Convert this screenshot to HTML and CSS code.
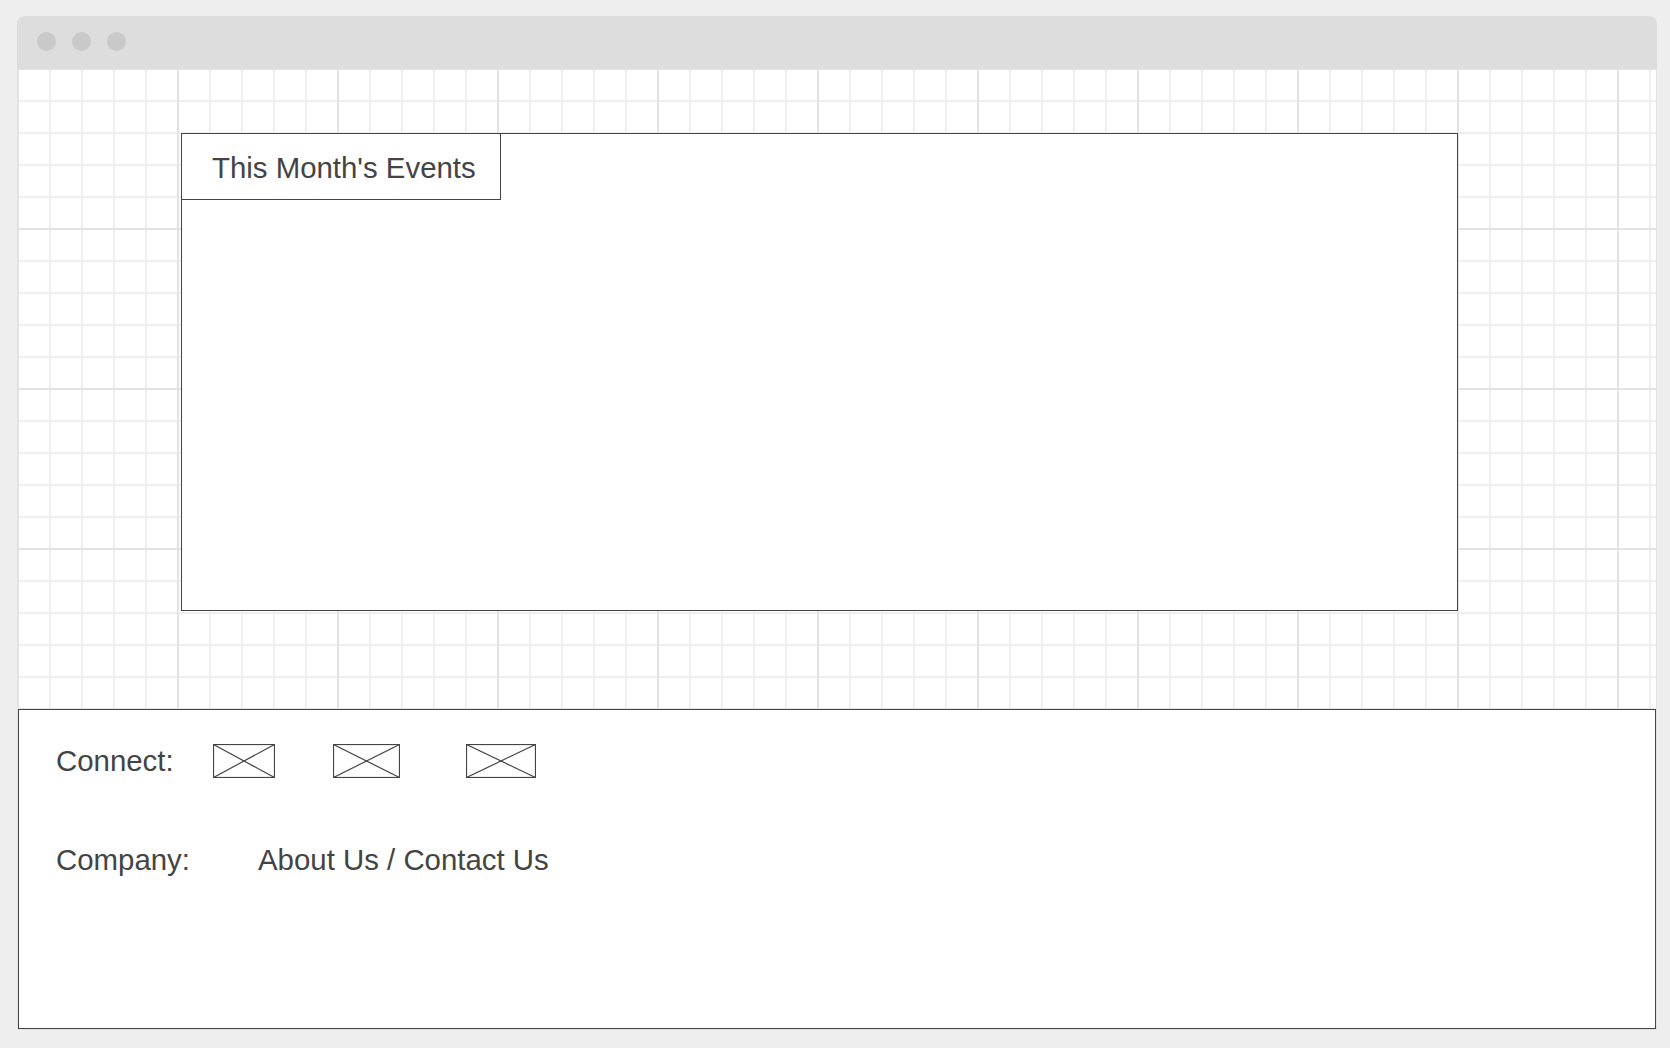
FILE: index.html
```html
<!DOCTYPE html>
<html lang="en">
<head>
<meta charset="utf-8">
<title>Wireframe</title>
<link rel="stylesheet" href="styles.css">
</head>
<body>
<div class="window">
  <div class="titlebar">
    <span class="dot"></span><span class="dot"></span><span class="dot"></span>
  </div>
  <div class="canvas">
    <section class="events">
      <div class="events-tab">This Month's Events</div>
    </section>
  </div>
  <footer class="footer">
    <div class="row connect-row">
      <span class="label label-connect">Connect:</span>
      <svg class="ph ph-1" viewBox="0 0 62 34" preserveAspectRatio="none"><rect x="0.5" y="0.5" width="61" height="33"/><line x1="0.5" y1="0.5" x2="61.5" y2="33.5"/><line x1="61.5" y1="0.5" x2="0.5" y2="33.5"/></svg>
      <svg class="ph ph-2" viewBox="0 0 67 34" preserveAspectRatio="none"><rect x="0.5" y="0.5" width="66" height="33"/><line x1="0.5" y1="0.5" x2="66.5" y2="33.5"/><line x1="66.5" y1="0.5" x2="0.5" y2="33.5"/></svg>
      <svg class="ph ph-3" viewBox="0 0 70 34" preserveAspectRatio="none"><rect x="0.5" y="0.5" width="69" height="33"/><line x1="0.5" y1="0.5" x2="69.5" y2="33.5"/><line x1="69.5" y1="0.5" x2="0.5" y2="33.5"/></svg>
    </div>
    <div class="row company-row">
      <span class="label label-company">Company:</span>
      <span class="links">About Us / Contact Us</span>
    </div>
  </footer>
</div>
</body>
</html>
```

FILE: styles.css
```css
html, body {
  margin: 0;
  padding: 0;
}
body {
  background: #eeeeee;
  font-family: "Liberation Sans", Arial, sans-serif;
  color: #444444;
}
.window {
  box-sizing: border-box;
  margin: 16px 0 0 17px;
  width: 1640px;
  border: 1px solid #e2e2e2;
  border-top: none;
  border-radius: 8px 8px 0 0;
  background: #ffffff;
}
.titlebar {
  height: 53px;
  margin: 0 -1px;
  background: #dddddd;
  border-radius: 8px 8px 0 0;
  display: flex;
  align-items: center;
  padding-left: 20px;
  gap: 16px;
  box-sizing: border-box;
}
.dot {
  width: 19px;
  height: 19px;
  border-radius: 50%;
  background: #c9c9c9;
  margin-top: -2px;
}
.canvas {
  height: 640px;
  box-sizing: border-box;
  padding: 64px 0 0 163px;
  background-color: #ffffff;
  background-image:
    linear-gradient(to right, #e3e3e3 2px, transparent 2px),
    linear-gradient(to bottom, #e3e3e3 2px, transparent 2px),
    linear-gradient(to right, #efefef 2px, transparent 2px),
    linear-gradient(to bottom, #efefef 2px, transparent 2px);
  background-size: 160px 160px, 160px 160px, 32px 32px, 32px 32px;
  background-position: -1px -1px;
}
.events {
  box-sizing: border-box;
  width: 1277px;
  height: 478px;
  border: 1px solid #444444;
  background: #ffffff;
}
.events-tab {
  box-sizing: border-box;
  width: 319px;
  height: 66px;
  border-right: 1px solid #444444;
  border-bottom: 1px solid #444444;
  padding: 17px 0 0 30px;
  font-size: 29.4px;
  line-height: 34px;
  white-space: nowrap;
}
.footer {
  box-sizing: border-box;
  height: 320px;
  border: 1px solid #444444;
  background: #ffffff;
  padding: 34px 0 0 37px;
  display: flex;
  flex-direction: column;
  gap: 65px;
}
.row {
  display: flex;
  align-items: center;
  height: 34px;
  font-size: 29.4px;
  line-height: 34px;
  white-space: nowrap;
}
.label-connect {
  width: 157px;
}
.label-company {
  width: 202px;
}
.ph {
  display: block;
  height: 34px;
  fill: none;
  stroke: #444444;
  stroke-width: 1.2;
}
.ph-1 {
  width: 62px;
}
.ph-2 {
  width: 67px;
  margin-left: 58px;
}
.ph-3 {
  width: 70px;
  margin-left: 66px;
}
```
